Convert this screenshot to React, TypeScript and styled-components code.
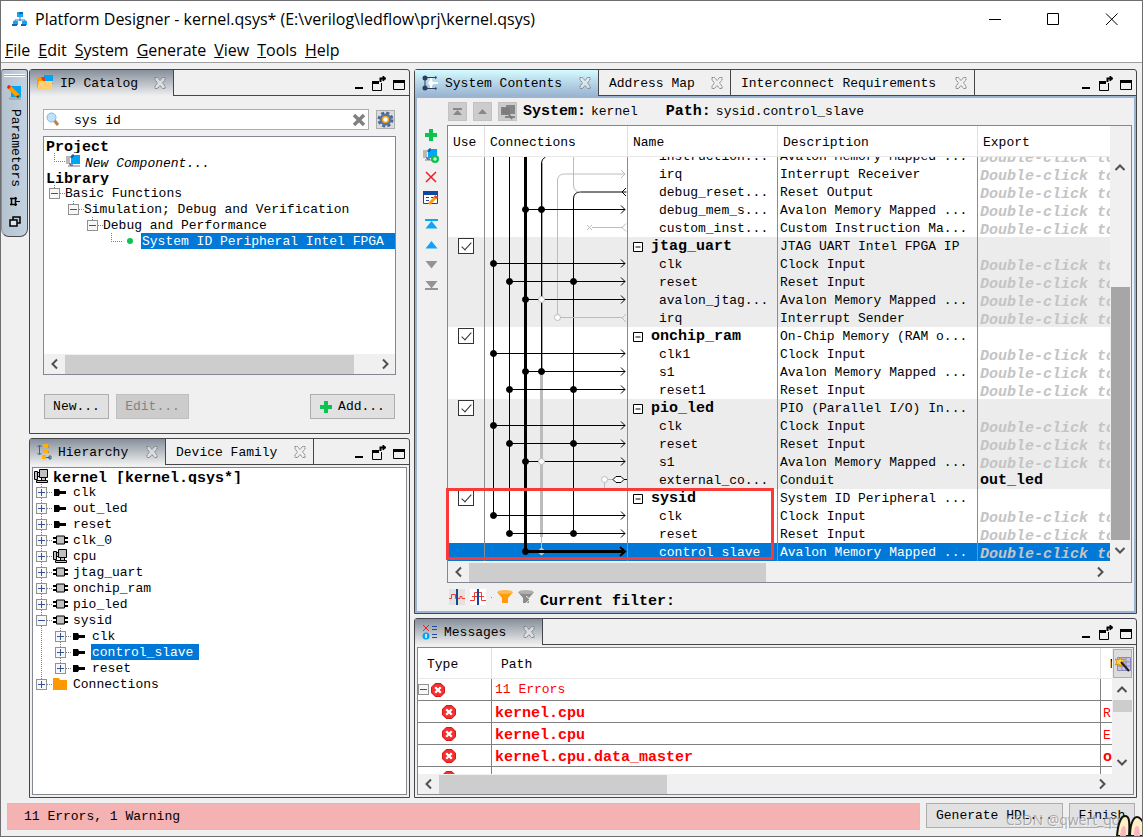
import React from "react";
import styled, { createGlobalStyle, css } from "styled-components";

const MONO = `"Liberation Mono", "Noto Sans CJK SC", monospace`;
const UI = `"Open Sans", "Noto Sans", sans-serif`;

const Global = createGlobalStyle`
  *, *::before, *::after { box-sizing: border-box; }
  body { margin: 0; background: #f0f0f0; color: #000; font: 13px/16px ${MONO}; }
  button, input { font: inherit; color: inherit; margin: 0; padding: 0; }
  button { background: none; border: 0; }
  svg { display: block; flex: none; }
  table { border-spacing: 0; }
`;

const Window = styled.div`
  position: relative;
  display: flex;
  flex-direction: column;
  height: 100vh;
  min-height: 700px;
  overflow: hidden;
  background: #f0f0f0;
  border: 1px solid #6e6e70;
`;

const TitleBar = styled.header`
  display: flex;
  align-items: center;
  height: 36px;
  padding: 0 23px 0 11px;
  gap: 7px;
  background: #fff;
  font: 16px/20px ${UI};
`;

const WindowTitle = styled.h1`
  flex: 1;
  margin: 0;
  font: inherit;
  white-space: nowrap;
`;

const WindowControls = styled.div`
  display: flex;
  gap: 43px;
`;

const MenuBar = styled.nav`
  display: flex;
  align-items: center;
  gap: 8px;
  height: 26px;
  padding: 0 4px;
  background: #fff;
  border-bottom: 1px solid #a0a0a0;
  font: 16px/20px ${UI};
`;

const MenuButton = styled.button`
  white-space: nowrap;
`;

const Workspace = styled.main`
  display: flex;
  flex: 1;
  min-height: 0;
  padding: 6px 5px 4px 0;
`;

const SideDock = styled.aside`
  display: flex;
  flex-direction: column;
  align-items: center;
  align-self: flex-start;
  gap: 8px;
  width: 27px;
  height: 168px;
  padding-top: 4px;
  background: linear-gradient(90deg, #b4c2cf, #c3d2e1);
  border: 1px solid #4a4a4a;
  border-left-color: #8a8f96;
  border-radius: 3px 3px 8px 8px;
`;

const Grip = styled.div`
  align-self: stretch;
  height: 3px;
  margin: 0 2px;
  border: solid #fff;
  border-width: 1px 0;
  background: #9aa8b8;
`;

const DockLabel = styled.button`
  writing-mode: vertical-rl;
  height: 80px;
`;

const LeftColumn = styled.div`
  display: flex;
  flex-direction: column;
  gap: 4px;
  flex: none;
  width: 381px;
  margin-left: 1px;
`;

const RightColumn = styled.div`
  display: flex;
  flex-direction: column;
  gap: 4px;
  flex: 1;
  min-width: 0;
  margin-left: 4px;
`;

const Panel = styled.section<{ $h?: number }>`
  display: flex;
  flex-direction: column;
  min-height: 0;
  ${(p) => (p.$h ? `flex: 0 0 ${p.$h}px;` : "flex: 1;")}
  border: 1px solid #46464a;
  border-radius: 3px 3px 0 0;
`;

const TabBar = styled.div`
  display: flex;
  flex: none;
  height: 26px;
`;

const Tab = styled.button<{ $look?: "gray" | "blue" }>`
  display: flex;
  align-items: center;
  gap: 6px;
  padding: 0 7px 0 ${(p) => (p.$look ? 7 : 10)}px;
  white-space: nowrap;
  border-right: 1px solid #46464a;
  ${(p) =>
    p.$look === "gray"
      ? css`background: linear-gradient(#858f9b, #b4bac1 45%, #f0f0f0);`
      : p.$look === "blue"
        ? css`background: linear-gradient(#d5fbff, #b9d9ea 45%, #9ab4d2);`
        : css`border-bottom: 1px solid #46464a;`}
`;

const TabLabel = styled.span<{ $w: number }>`
  width: ${(p) => p.$w}px;
  padding-top: 2px;
  text-align: left;
`;

const PanelControls = styled.div`
  display: flex;
  flex: 1;
  align-items: center;
  justify-content: flex-end;
  padding: 2px 4px 0 0;
  border-bottom: 1px solid #46464a;
`;

const CatalogBody = styled.div`
  display: flex;
  flex-direction: column;
  flex: 1;
  min-height: 0;
  padding: 13px 13px 14px;
`;

const SearchRow = styled.div`
  display: flex;
  align-items: center;
  gap: 7px;
  padding-right: 1px;
`;

const SearchBox = styled.label`
  display: flex;
  flex: 1;
  align-items: center;
  height: 21px;
  padding: 0 2px;
  background: #fff;
  border: 1px solid #abadb3;
`;

const SearchInput = styled.input`
  flex: 1;
  min-width: 0;
  margin-left: 14px;
  padding-top: 2px;
  border: 0;
  outline: 0;
  background: transparent;
`;

const SquareButton = styled.button<{ $disabled?: boolean }>`
  display: grid;
  place-items: center;
  width: 19px;
  height: 19px;
  border: 1px solid ${(p) => (p.$disabled ? "#c2c2c2" : "#adadad")};
  background: ${(p) => (p.$disabled ? "#cccccc" : "#dcdcdc")};
`;

const TreeBox = styled.div<{ $flush?: boolean }>`
  display: flex;
  flex-direction: column;
  flex: 1;
  min-height: 0;
  margin: ${(p) => (p.$flush ? "2px" : "6px 0 19px")};
  background: #fff;
  border: 1px solid #828790;
`;

const TreeList = styled.ul`
  flex: 1;
  min-height: 0;
  margin: 0;
  padding: 0;
  overflow: hidden;
  list-style: none;
`;

const TreeItem = styled.li`
  display: flex;
  height: 16px;
  white-space: nowrap;
`;

const TreeLabel = styled.span<{ $bold?: boolean; $italic?: boolean; $selected?: boolean; $fill?: boolean }>`
  line-height: 18px;
  ${(p) => p.$bold && "font-size: 15px; font-weight: 700; line-height: 22px; overflow: hidden;"}
  ${(p) => p.$italic && "font-style: italic; line-height: 22px;"}
  ${(p) => p.$selected && "background: #0078d7; color: #fff; padding: 0 6px 0 1px; margin-left: -1px;"}
  ${(p) => p.$fill && "flex: 1;"}
`;

const ButtonRow = styled.div`
  display: flex;
  gap: 7px;
  padding: 0 1px;
`;

const PushButton = styled.button<{ $w: number; $right?: boolean }>`
  display: flex;
  align-items: center;
  justify-content: center;
  gap: 6px;
  width: ${(p) => p.$w}px;
  height: 25px;
  padding-top: 1px;
  white-space: nowrap;
  background: #e1e1e1;
  border: 1px solid #adadad;
  ${(p) => p.$right && "margin-left: auto;"}
  &:disabled { background: #cccccc; border-color: #bfbfbf; color: #838383; }
`;

const ScrollTrack = styled.div`
  display: flex;
  flex: none;
  align-items: center;
  height: 20px;
  background: #f0f0f0;
`;

const ScrollCorner = styled.div`
  flex: none;
  height: 22px;
`;

const ScrollTrackV = styled.div<{ $pt?: number }>`
  display: flex;
  flex: 1;
  min-height: 0;
  flex-direction: column;
  align-items: center;
  width: 20px;
  padding-top: ${(p) => p.$pt ?? 0}px;
  background: #f0f0f0;
`;

const ThumbH = styled.div<{ $w: string }>`
  width: ${(p) => p.$w};
  height: 19px;
  background: #cdcdcd;
`;

const ThumbV = styled.div<{ $h: number; $dark?: boolean }>`
  flex: none;
  width: 19px;
  height: ${(p) => p.$h}px;
  background: ${(p) => (p.$dark ? "#a6a6a6" : "#cdcdcd")};
`;

const Spacer = styled.span`
  flex: 1;
`;

const ArrowButton = styled.button`
  display: grid;
  place-items: center;
  flex: none;
  width: 21px;
  height: 20px;
`;

/* System Contents */

const FocusFrame = styled.div`
  display: flex;
  flex-direction: column;
  flex: 1;
  min-height: 0;
  border: 2px solid #9ab4d2;
`;

const PathBar = styled.div`
  display: flex;
  align-items: center;
  flex: none;
  gap: 6px;
  height: 27px;
  padding-left: 31px;
  white-space: nowrap;
`;

const PathText = styled.span`
  margin-right: 22px;
`;

const Strong = styled.b`
  margin-right: 5px;
  font-size: 15px;
`;

const ContentRow = styled.div`
  display: flex;
  flex: 1;
  min-height: 0;
`;

const ToolStrip = styled.div`
  display: flex;
  flex: none;
  flex-direction: column;
  align-items: center;
  gap: 5px;
  width: 30px;
  padding: 2px 2px 0 0;
`;

const ToolGap = styled.div`
  height: 1px;
`;

const ToolButton = styled.button<{ $short?: boolean }>`
  display: grid;
  place-items: center;
  width: 18px;
  height: ${(p) => (p.$short ? 15 : 16)}px;
`;

const GridFrame = styled.div`
  display: flex;
  flex: 1;
  min-width: 0;
  margin-right: 2px;
  border: 1px solid #828790;
`;

const GridMain = styled.div`
  position: relative;
  display: flex;
  flex: 1;
  min-width: 0;
  flex-direction: column;
  background: #fff;
`;

const GridViewport = styled.div`
  position: relative;
  display: flex;
  flex: 1;
  min-height: 0;
  overflow: hidden;
  border-bottom: 1px solid #fff;
`;

const SystemTable = styled.table`
  display: flex;
  flex: 1;
  min-width: 0;
  flex-direction: column;
`;

const rowGrid = css`
  display: grid;
  flex: none;
  grid-template-columns: 37px 143px 150px 200px minmax(0, 1fr);
`;

const HeadRow = styled.tr`
  ${rowGrid}
  height: 31px;
  border-bottom: 1px solid #e8e8e8;
`;

const HeadCell = styled.th`
  padding: 9px 0 0 5px;
  font-weight: 400;
  text-align: left;
  border-right: 1px solid #e0e0e0;
  &:last-child { border-right: 0; }
`;

const SystemBody = styled.tbody`
  display: flex;
  flex: 1;
  min-height: 0;
  flex-direction: column;
  justify-content: flex-end;
  overflow: hidden;
`;

const SystemRow = styled.tr<{ $shade?: boolean; $selected?: boolean }>`
  ${rowGrid}
  height: 18px;
  line-height: 16px;
  background: ${(p) => (p.$selected ? "#0078d7" : p.$shade ? "#ececec" : "#fff")};
  color: ${(p) => (p.$selected ? "#fff" : "#000")};
`;

const Cell = styled.td<{ $pad?: number }>`
  display: flex;
  align-items: center;
  min-width: 0;
  padding: 2px 0 0 ${(p) => p.$pad ?? 2}px;
  overflow: hidden;
  white-space: nowrap;
  border-right: 1px solid #8c8c90;
  &:first-child { padding: 0 0 0 10px; }
  &:last-child { border-right: 0; }
`;

const ModuleName = styled.b`
  margin-left: 8px;
  font-size: 15px;
`;

const ExportHint = styled.i`
  padding-top: 4px;
  font-size: 15px;
  font-weight: 700;
  color: #c4c4c4;
`;

const ExportName = styled.b`
  font-size: 15px;
`;

const CheckBox = styled.input`
  position: relative;
  width: 16px;
  height: 16px;
  appearance: none;
  background: #fff;
  border: 1px solid #333;
  &:checked::after {
    content: "";
    position: absolute;
    left: 5px;
    top: 1px;
    width: 5px;
    height: 10px;
    border: solid #333;
    border-width: 0 1px 1px 0;
    transform: rotate(42deg);
  }
`;

const Wiring = styled.svg`
  position: absolute;
  left: 37px;
  bottom: 0;
`;

const HighlightAnchor = styled.div`
  position: absolute;
  left: 0;
  bottom: 22px;
  height: 0;
`;

const Highlight = styled.div`
  position: absolute;
  left: -2px;
  bottom: 0;
  width: 328px;
  height: 72px;
  border: 3px solid #f93a37;
`;

const ScrollColumn = styled.div`
  display: flex;
  flex: none;
  flex-direction: column;
  width: 21px;
  background: #f0f0f0;
`;

const FilterBar = styled.div`
  display: flex;
  align-items: center;
  flex: none;
  gap: 5px;
  height: 28px;
  padding-left: 32px;
`;

const FilterDot = styled.span`
  width: 1px;
  height: 1px;
  background: #909090;
`;

const FilterLabel = styled.b`
  padding: 10px 0 0 1px;
  font-size: 15px;
`;

/* Messages */

const MessageFrame = styled.div`
  display: flex;
  flex: 1;
  min-height: 0;
  margin: 2px;
  border: 1px solid #828790;
`;

const MessageTable = styled.table`
  display: flex;
  flex: 1;
  min-height: 0;
  flex-direction: column;
  overflow: hidden;
`;

const messageGrid = css`
  display: grid;
  flex: none;
  grid-template-columns: 74px minmax(0, 1fr) 11px;
`;

const MessageHead = styled.tr`
  ${messageGrid}
  height: 31px;
  border-bottom: 1px solid #e8e8e8;
`;

const MessageHeadCell = styled.th`
  padding: 9px 0 0 9px;
  overflow: hidden;
  font-weight: 400;
  text-align: left;
  border-right: 1px solid #e0e0e0;
  &:last-child { border-right: 0; }
`;

const MessageRow = styled.tr`
  ${messageGrid}
  height: 22px;
  border-bottom: 1px solid #808080;
  color: #ff0000;
`;

const MessageCell = styled.td<{ $bold?: boolean; $indent?: number; $low?: boolean }>`
  display: flex;
  align-items: center;
  overflow: hidden;
  padding: ${(p) => (p.$low ? 5 : 0)}px 0 0 ${(p) => p.$indent ?? 3}px;
  border-right: 1px solid #808080;
  &:last-child { padding-left: 2px; border-right: 0; }
  ${(p) => p.$bold && "font-size: 15px; font-weight: 700;"}
`;

const WizardButton = styled.button`
  display: grid;
  place-items: center;
  width: 19px;
  height: 29px;
  margin: 1px 0 0 1px;
  border: 1px solid #adadad;
  background: #dcdcdc;
`;

/* Status */

const StatusBar = styled.footer`
  display: flex;
  flex: none;
  gap: 6px;
  height: 34px;
  padding: 1px 7px 0 6px;
`;

const StatusText = styled.div`
  flex: 1;
  height: 27px;
  padding: 5px 16px;
  background: #f4b2b2;
  border: 1px solid #c4c4c4;
`;

const Watermark = styled.div`
  position: absolute;
  right: 13px;
  bottom: 7px;
  font: 14px/18px ${UI};
  color: rgba(150, 150, 150, 0.8);
  text-shadow: 1px 1px 0 rgba(255, 255, 255, 0.6);
`;

const Mascot = styled.svg`
  position: absolute;
  right: 0;
  bottom: 0;
`;

/* Icons */

const CloseX = () => (
  <svg width="12" height="12" viewBox="0 0 12 12" fill="#f0f0f0" fillOpacity=".6" stroke="#7a7e82" strokeWidth="1">
    <path d="M1 .5h2.500L6 3.500 8.500.5H11V3L8.500 6 11 9v2.500H8.500L6 8.500l-2.500 3H1V9l2.500-3L1 3z" strokeDasharray="1.500 .5" />
  </svg>
);

const MinMax = () => (
  <PanelControls>
    <svg width="50" height="16" viewBox="0 0 50 16" fill="none" stroke="#000">
      <path d="M0 12h8" strokeWidth="2" />
      <path d="M17.500 5v9.500h9V7" />
      <path d="M17 6.500h7" strokeWidth="3" />
      <path d="M25.500 6V2.500H29" strokeWidth="2" />
      <path d="M28 0l3 2.500L28 5z" fill="#000" />
      <path d="M38.500 4.500h11v9h-11z" /><path d="M38 5.500h12" strokeWidth="3" />
    </svg>
  </PanelControls>
);

const Plus = () => (
  <svg width="12" height="12" viewBox="0 0 12 12"><path d="M4 0h4v4h4v4H8v4H4V8H0V4h4z" fill="#0cc250" /></svg>
);

const Chevron = ({ dir }: { dir: "left" | "right" | "up" | "down" }) => {
  const d = {
    left: "M8 1.500 3.500 6 8 10.500",
    right: "M4 1.500 8.500 6 4 10.500",
    up: "M1.500 8 6 3.500 10.500 8",
    down: "M1.500 4 6 8.500 10.500 4",
  }[dir];
  return (
    <ArrowButton aria-label={`Scroll ${dir}`}>
      <svg width="12" height="12" viewBox="0 0 12 12" fill="none" stroke="#505050" strokeWidth="2"><path d={d} /></svg>
    </ArrowButton>
  );
};

const ComponentShape = () => (
  <g>
    <path d="M0 2h4v8H0zM2 11h12v2H2z" fill="#b8b8b8" />
    <path d="M5 1h9v9H5z" fill="#00a4f4" />
    <path d="M4 3h3V0M4 9v2h3" fill="none" stroke="#0a3c88" />
  </g>
);

const CatalogIcon = () => (
  <svg width="17" height="16" viewBox="0 0 17 16">
    <path d="M7 0h9v9H7z" fill="#00a4f4" />
    <path d="M4 2h4v5H4z" fill="#e03c28" />
    <path d="M0 2h4l1 3h1v9H0z" fill="#ff9800" />
    <path d="M2 6h14l-2 9H0z" fill="#ffcf70" />
  </svg>
);

const HierarchyIcon = () => (
  <svg width="15" height="16" viewBox="0 0 15 16">
    <path d="M2.500 2v8M.5 3l2-2 2 2M.5 9l2 2 2-2" stroke="#40608c" fill="none" />
    <path d="M6 0h5v4H6zM6 5h5v4H6zM5 11h4v4H5z" fill="#ffb300" />
    <path d="M11 2h1v2h-1zM11 7h1v2h-1z" fill="#e08c00" />
    <path d="M9 13.500h4M12 12h2v3h-2z" stroke="#40608c" fill="none" />
  </svg>
);

const ContentsIcon = () => (
  <svg width="17" height="16" viewBox="0 0 17 16" fill="none">
    <path d="M3 2v12M3 2.500h12M3 13.500h12" stroke="#28405c" />
    <path d="M9 3v10M9 8h7" stroke="#fff" strokeWidth="2" />
    <circle cx="3" cy="3" r="2.500" fill="#28405c" /><circle cx="3" cy="13" r="2.500" fill="#28405c" />
    <circle cx="9" cy="8" r="2.500" fill="#fff" /><path d="M13 1l2 1.500-2 1.500M13 12l2 1.500-2 1.500" stroke="#54708c" />
  </svg>
);

const MessagesIcon = () => (
  <svg width="16" height="16" viewBox="0 0 16 16" fill="none">
    <path d="M1 1l6 6M7 1 1 7" stroke="#ec2024" />
    <circle cx="4" cy="12" r="3.500" fill="#00a4f4" /><path d="M4 10v4" stroke="#fff" strokeWidth="1.500" />
    <path d="M10 2.500h5M10 5.500h5M10 10.500h5M10 13.500h5" stroke="#1c4ca0" />
  </svg>
);

const PencilIcon = () => (
  <svg width="15" height="15" viewBox="0 0 15 15">
    <path d="M4 1h10v11H4z" fill="#00a4f4" /><path d="M2 12h12v3H2z" fill="#a8acb0" />
    <path d="M2 2l9 9" stroke="#ffa000" strokeWidth="4" /><path d="M1 0l3 1-2 3-2-1z" fill="#ec2024" /><path d="M9 12l3 1-1-3z" fill="#332" />
  </svg>
);

const ErrorIcon = () => (
  <svg width="14" height="14" viewBox="0 0 15 15">
    <path d="M4.500.5h6l4 4v6l-4 4h-6l-4-4v-6z" fill="#f23030" stroke="#d80808" />
    <path d="M4.500 4.500l6 6M10.500 4.500l-6 6" stroke="#fff" strokeWidth="2.500" />
  </svg>
);

const ExpanderShape = ({ x, open }: { x: number; open?: boolean }) => (
  <g transform={`translate(${x} 3)`}>
    <rect x=".5" y=".5" width="10" height="10" fill="#f7f7f7" stroke="#919191" />
    <path d={open ? "M2 5.500h7" : "M2 5.500h7M5.500 2v7"} stroke="#3452a0" />
  </g>
);

const Chip = () => (
  <g>
    <path d="M0 6h15M0 10h15" stroke="#000" strokeWidth="2" />
    <path d="M3.500 4h8v8h-8z" fill="#c0c0c0" stroke="#000" />
  </g>
);
const Port = () => <path d="M1 5h5l1 2h6v3H7l-1 2H1z" />;
const Machine = () => (
  <g fill="#c0c0c0" stroke="#000">
    <path d="M.5 3.500h3v8h-3zM5.500 1.500h8v8h-8zM3.500 4.500h2v4h-2zM2.500 12.500h11v2h-11zM7.500 9.500h4v3h-4z" />
  </g>
);
const Folder = () => <path d="M0 2h6l1 2h7v10H0z" fill="#ff9800" />;

/* Data */

type Kind = "port" | "chip" | "machine" | "folder";
const hierarchy: { label: string; kind: Kind; level: number; open?: boolean; selected?: boolean }[] = [
  { label: "clk", kind: "port", level: 0 },
  { label: "out_led", kind: "port", level: 0 },
  { label: "reset", kind: "port", level: 0 },
  { label: "clk_0", kind: "chip", level: 0 },
  { label: "cpu", kind: "machine", level: 0 },
  { label: "jtag_uart", kind: "chip", level: 0 },
  { label: "onchip_ram", kind: "chip", level: 0 },
  { label: "pio_led", kind: "chip", level: 0 },
  { label: "sysid", kind: "chip", level: 0, open: true },
  { label: "clk", kind: "port", level: 1 },
  { label: "control_slave", kind: "port", level: 1, selected: true },
  { label: "reset", kind: "port", level: 1 },
  { label: "Connections", kind: "folder", level: 0 },
];

const kinds: Record<Kind, React.ReactElement> = {
  port: <Port />, chip: <Chip />, machine: <Machine />, folder: <Folder />,
};

type SysRow = { name: string; desc: string; module?: boolean; exp?: string; shade?: boolean; selected?: boolean };
const systemRows: SysRow[] = [
  { name: "instruction...", desc: "Avalon Memory Mapped ..." },
  { name: "irq", desc: "Interrupt Receiver" },
  { name: "debug_reset...", desc: "Reset Output" },
  { name: "debug_mem_s...", desc: "Avalon Memory Mapped ..." },
  { name: "custom_inst...", desc: "Custom Instruction Ma..." },
  { name: "jtag_uart", desc: "JTAG UART Intel FPGA IP", module: true, shade: true },
  { name: "clk", desc: "Clock Input", shade: true },
  { name: "reset", desc: "Reset Input", shade: true },
  { name: "avalon_jtag...", desc: "Avalon Memory Mapped ...", shade: true },
  { name: "irq", desc: "Interrupt Sender", shade: true },
  { name: "onchip_ram", desc: "On-Chip Memory (RAM o...", module: true },
  { name: "clk1", desc: "Clock Input" },
  { name: "s1", desc: "Avalon Memory Mapped ..." },
  { name: "reset1", desc: "Reset Input" },
  { name: "pio_led", desc: "PIO (Parallel I/O) In...", module: true, shade: true },
  { name: "clk", desc: "Clock Input", shade: true },
  { name: "reset", desc: "Reset Input", shade: true },
  { name: "s1", desc: "Avalon Memory Mapped ...", shade: true },
  { name: "external_co...", desc: "Conduit", exp: "out_led", shade: true },
  { name: "sysid", desc: "System ID Peripheral ...", module: true },
  { name: "clk", desc: "Clock Input" },
  { name: "reset", desc: "Reset Input" },
  { name: "control_slave", desc: "Avalon Memory Mapped ...", selected: true },
];

/* Each wire: y, start x, and the x positions of its solid junctions. */
const wires: [number, number, number[]][] = [
  [53, 40, [40, 56]],
  [107, 8, [8]],
  [125, 24, [24, 88]],
  [143, 40, [40]],
  [197, 8, [8]],
  [215, 40, [40, 56]],
  [233, 24, [24, 88]],
  [269, 8, [8]],
  [287, 24, [24, 88]],
  [305, 40, [40]],
  [359, 8, [8]],
  [377, 24, [24, 88]],
];

const Connections = () => (
  <Wiring width="142" height="404" viewBox="0 0 142 404" fill="none" stroke="#000">
    <path d="M56.500 214v166" stroke="#bcbcbc" strokeWidth="3" />
    <path d="M56.500 380v15" stroke="#bcbcbc" />
    <path d="M57 6v208" stroke="#a8a8a8" strokeWidth="2" />
    <path d="M56.500 215V6q0-4 4-6" strokeWidth="1" />
    <path d="M8.500 0v359M24.500 0v377M88.500 377V42q0-7 7-7h46" />
    <path d="M40.500 0v395" strokeWidth="3" />
    <g stroke="#bcbcbc">
      <path d="M88.500 0v28q0 7 7 7M72.500 160V24q0-7 7-7h60M136 13l4 4-4 4M141 157l-4 4 4 4M75 160.500h63M102 68l5 5M107 68l-5 5M107 70.500h31M141 66.500l-4 4 4 4M119.500 324v10M122 322.500h6" />
    </g>
    <path d="M141 31l-4 4 4 4" />
    {wires.map(([y, x, dots]) => (
      <g key={y}>
        <path d={`M${x} ${y - 0.5}h${140 - x}M136 ${y - 4.5}l4 4-4 4`} />
        {dots.map((d) => <circle key={d} cx={d + 0.5} cy={y - 0.5} r="3" fill="#000" />)}
      </g>
    ))}
    <g fill="#fff" stroke="#bcbcbc">
      <circle cx="72.500" cy="160.500" r="3" /><circle cx="119.500" cy="322.500" r="3" />
      <circle cx="56.500" cy="142.500" r="3" /><circle cx="56.500" cy="304.500" r="3" />
    </g>
    <path d="M128 322.500l3-3h5l3 3-3 3h-5zM139 322.500h3" fill="#fff" />
    <path d="M40 394.500h98" strokeWidth="3" /><path d="M135 390l5 4.500-5 4.500" strokeWidth="2" />
    <circle cx="40.500" cy="394.500" r="3" fill="#000" />
    <path d="M53.500 393l3-2.500 3 2.500zM53.500 396l3 2.500 3-2.500z" fill="#c8c8c8" stroke="none" />
  </Wiring>
);

const Tri = ({ color, up, bar }: { color: string; up?: boolean; bar?: boolean }) => (
  <svg width="13" height="11" viewBox="0 0 13 11" fill={color}>
    <path d={up ? "M6.500 2l6 7.500h-12z" : "M6.500 9.500l6-7.500h-12z"} />
    {bar && <path d={up ? "M0 0h13v2H0z" : "M0 9h13v2H0z"} />}
  </svg>
);

const CatalogTree = () => (
  <TreeList>
    <TreeItem><svg width="2" height="16" /><TreeLabel $bold>Project</TreeLabel></TreeItem>
    <TreeItem>
      <svg width="41" height="16" viewBox="0 0 41 16">
        <path d="M10.500 0v8M10 8.500h12" stroke="#808080" strokeDasharray="1 1" />
        <g transform="translate(22 1)"><ComponentShape /></g>
      </svg>
      <TreeLabel $italic>New Component...</TreeLabel>
    </TreeItem>
    <TreeItem><svg width="2" height="16" /><TreeLabel $bold>Library</TreeLabel></TreeItem>
    {["Basic Functions", "Simulation; Debug and Verification", "Debug and Performance"].map((t, i) => (
      <TreeItem key={t}>
        <svg width={21 + i * 19} height="16">
          <path d={`M${10.5 + i * 19} 0v3M${16 + i * 19} 8.500h5`} stroke="#808080" strokeDasharray="1 1" />
          <ExpanderShape x={5 + i * 19} open />
        </svg>
        <TreeLabel>{t}</TreeLabel>
      </TreeItem>
    ))}
    <TreeItem>
      <svg width="98" height="16">
        <path d="M67.500 0v8M67 8.500h11" stroke="#808080" strokeDasharray="1 1" />
        <circle cx="86" cy="8" r="3" fill="#0cc250" />
      </svg>
      <TreeLabel $selected $fill>System ID Peripheral Intel FPGA</TreeLabel>
    </TreeItem>
  </TreeList>
);

const HierarchyTree = () => (
  <TreeList>
    <TreeItem>
      <svg width="20" height="16"><g transform="translate(1 0)"><Machine /></g></svg>
      <TreeLabel $bold>kernel [kernel.qsys*]</TreeLabel>
    </TreeItem>
    {hierarchy.map((n, i) => (
      <TreeItem key={i}>
        <svg width={40 + n.level * 19} height="16">
          <path
            d={`M8.500 0v${n.kind === "folder" ? 8 : 16}M${14 + n.level * 19} 8.500h5${n.level ? `M27.500 0v${n.label === "reset" ? 8 : 16}` : ""}`}
            stroke="#808080" strokeDasharray="1 1"
          />
          <ExpanderShape x={3 + n.level * 19} open={n.open} />
          <g transform={`translate(${20 + n.level * 19} 0)`}>{kinds[n.kind]}</g>
        </svg>
        <TreeLabel $selected={n.selected}>{n.label}</TreeLabel>
      </TreeItem>
    ))}
  </TreeList>
);

const menus = ["File", "Edit", "System", "Generate", "View", "Tools", "Help"];

export default function App() {
  return (
    <Window>
      <Global />
      <TitleBar>
        <svg width="16" height="16" viewBox="0 0 16 16">
          <path d="M8 6v4M3 12V9h10v3" fill="none" stroke="#1580d0" />
          <path d="M5 1h6v5H5zM1 10h5v4H1zM10 10h5v4h-5z" fill="#18a4f0" />
          <path d="M7 1h4v2H7zM0 13h5v2H0zM9 13h5v2H9z" fill="#1764b0" />
        </svg>
        <WindowTitle>Platform Designer - kernel.qsys* (E:\verilog\ledflow\prj\kernel.qsys)</WindowTitle>
        <WindowControls>
          {["M1 6.500h12", "M1.500.5h11v11h-11z", "M2 .5l11.500 11.500M13.500.5 2 12"].map((d, i) => (
            <button key={d} aria-label={["Minimize", "Maximize", "Close"][i]}>
              <svg width="15" height="13" viewBox="0 0 15 13" fill="none" stroke="#000"><path d={d} /></svg>
            </button>
          ))}
        </WindowControls>
      </TitleBar>
      <MenuBar>{menus.map((m) => <MenuButton key={m}><u>{m[0]}</u>{m.slice(1)}</MenuButton>)}</MenuBar>

      <Workspace>
        <SideDock>
          <Grip />
          <PencilIcon />
          <DockLabel>Parameters</DockLabel>
          <svg width="12" height="36" viewBox="0 0 12 36" fill="none" stroke="#000">
            <path d="M1 2.500h7M1 8.500h7M2.500 2v7M6.500 1v9" strokeWidth="1.500" /><path d="M7 5.500h4" />
            <path d="M4 21h7v6H4z" strokeWidth="1.500" /><path d="M1 24h7v6H1z" fill="#dfe6ee" strokeWidth="1.500" />
          </svg>
        </SideDock>

        <LeftColumn>
          <Panel $h={365}>
            <TabBar>
              <Tab $look="gray"><CatalogIcon /><TabLabel $w={88}>IP Catalog</TabLabel><CloseX /></Tab>
              <MinMax />
            </TabBar>
            <CatalogBody>
              <SearchRow>
                <SearchBox>
                  <svg width="14" height="15" viewBox="0 0 14 15">
                    <path d="M8 8l4 5" stroke="#c08040" strokeWidth="3" />
                    <circle cx="5.500" cy="5.500" r="4.500" fill="#bfe2f8" stroke="#8cb4d8" />
                  </svg>
                  <SearchInput aria-label="Search IP" defaultValue="sys id" />
                  <svg width="14" height="14" viewBox="0 0 14 14"><path d="M2 2l10 10M12 2 2 12" stroke="#808080" strokeWidth="3.500" /></svg>
                </SearchBox>
                <SquareButton aria-label="Search settings">
                  <svg width="17" height="17" viewBox="0 0 17 17">
                    <circle cx="8.500" cy="8.500" r="6.500" fill="none" stroke="#4a6a98" strokeWidth="3" strokeDasharray="3 2.100" />
                    <circle cx="8.500" cy="8.500" r="4.500" fill="#fff" stroke="#54749f" strokeWidth="3" />
                    <circle cx="8.500" cy="8.500" r="3" fill="#fff" stroke="#f0a020" strokeWidth="1.500" />
                  </svg>
                </SquareButton>
              </SearchRow>
              <TreeBox>
                <CatalogTree />
                <ScrollTrack><Chevron dir="left" /><ThumbH $w="289px" /><Spacer /><Chevron dir="right" /></ScrollTrack>
              </TreeBox>
              <ButtonRow>
                <PushButton $w={65}>New...</PushButton>
                <PushButton $w={73} disabled>Edit...</PushButton>
                <PushButton $w={85} $right><Plus />Add...</PushButton>
              </ButtonRow>
            </CatalogBody>
          </Panel>

          <Panel>
            <TabBar>
              <Tab $look="gray"><HierarchyIcon /><TabLabel $w={82}>Hierarchy</TabLabel><CloseX /></Tab>
              <Tab><TabLabel $w={112}>Device Family</TabLabel><CloseX /></Tab>
              <MinMax />
            </TabBar>
            <TreeBox $flush><HierarchyTree /></TreeBox>
          </Panel>
        </LeftColumn>

        <RightColumn>
          <Panel>
            <TabBar>
              <Tab $look="blue"><ContentsIcon /><TabLabel $w={128}>System Contents</TabLabel><CloseX /></Tab>
              <Tab><TabLabel $w={96}>Address Map</TabLabel><CloseX /></Tab>
              <Tab><TabLabel $w={208}>Interconnect Requirements</TabLabel><CloseX /></Tab>
              <MinMax />
            </TabBar>
            <FocusFrame>
              <PathBar>
                <SquareButton $disabled aria-label="Move to top"><svg width="9" height="8"><path d="M0 0h9v2H0zM4.500 2 9 7H0z" fill="#888" /></svg></SquareButton>
                <SquareButton $disabled aria-label="Move up"><svg width="9" height="6"><path d="M4.500 0 9 5H0z" fill="#888" /></svg></SquareButton>
                <SquareButton $disabled aria-label="Drill into subsystem">
                  <svg width="16" height="16" viewBox="0 0 16 16"><path d="M6 1h9v9H6zM1 3h3v8H1zM5 12h10v2H5z" fill="#858585" /><circle cx="6" cy="7" r="4" fill="#7c7c7c" /><path d="M8 9l4 6" stroke="#7c7c7c" strokeWidth="2" /></svg>
                </SquareButton>
                <PathText><Strong>System:</Strong>kernel</PathText>
                <PathText><Strong>Path:</Strong>sysid.control_slave</PathText>
              </PathBar>
              <ContentRow>
                <ToolStrip>
                  <ToolButton aria-label="Add"><Plus /></ToolButton>
                  <ToolButton aria-label="Add component">
                    <svg width="17" height="16" viewBox="0 0 17 16"><ComponentShape /><circle cx="12" cy="11" r="4" fill="#0cc250" /><path d="M12 9v4M10 11h4" stroke="#fff" /></svg>
                  </ToolButton>
                  <ToolButton aria-label="Remove"><svg width="12" height="12" viewBox="0 0 12 12"><path d="M1 1l10 10M11 1 1 11" stroke="#ec2024" strokeWidth="1.500" /></svg></ToolButton>
                  <ToolButton aria-label="Edit">
                    <svg width="16" height="15" viewBox="0 0 16 15">
                      <path d="M.5.5h14v12H.5z" fill="#fff" stroke="#1048a0" /><path d="M0 0h15v4H0z" fill="#1048a0" />
                      <path d="M3 6.500h3M3 9.500h3M8 6.500h4" stroke="#1048a0" /><path d="M6 13l7-7" stroke="#ff9c10" strokeWidth="3" /><path d="M12 4l3 2-1 2-3-2z" fill="#ec4030" />
                    </svg>
                  </ToolButton>
                  <ToolGap />
                  <ToolButton $short aria-label="Move to top"><Tri color="#10a4f8" up bar /></ToolButton>
                  <ToolButton $short aria-label="Move up"><Tri color="#10a4f8" up /></ToolButton>
                  <ToolButton $short aria-label="Move down"><Tri color="#949494" /></ToolButton>
                  <ToolButton $short aria-label="Move to bottom"><Tri color="#949494" bar /></ToolButton>
                </ToolStrip>
                <GridFrame>
                  <GridMain>
                    <GridViewport>
                      <SystemTable>
                        <thead>
                          <HeadRow>{["Use", "Connections", "Name", "Description", "Export"].map((h) => <HeadCell key={h}>{h}</HeadCell>)}</HeadRow>
                        </thead>
                        <SystemBody>
                          {systemRows.map((r, i) => (
                            <SystemRow key={i} $shade={r.shade} $selected={r.selected}>
                              <Cell>{r.module && <CheckBox type="checkbox" defaultChecked aria-label={`Use ${r.name}`} />}</Cell>
                              <Cell />
                              <Cell $pad={r.module ? 5 : 31}>
                                {r.module ? (
                                  <>
                                    <svg width="10" height="10" viewBox="0 0 10 10" fill="#fff" stroke="#000"><path d="M.5.5h9v9h-9zM2.500 5h5" /></svg>
                                    <ModuleName>{r.name}</ModuleName>
                                  </>
                                ) : r.name}
                              </Cell>
                              <Cell>{r.desc}</Cell>
                              <Cell>{r.exp ? <ExportName>{r.exp}</ExportName> : !r.module && <ExportHint>Double-click to</ExportHint>}</Cell>
                            </SystemRow>
                          ))}
                        </SystemBody>
                      </SystemTable>
                      <Connections />
                    </GridViewport>
                    <ScrollTrack><Chevron dir="left" /><ThumbH $w="297px" /><Spacer /><Chevron dir="right" /></ScrollTrack>
                    <HighlightAnchor><Highlight /></HighlightAnchor>
                  </GridMain>
                  <ScrollColumn>
                    <ScrollTrackV $pt={32}>
                      <Chevron dir="up" />
                      <Spacer />
                      <ThumbV $h={253} $dark />
                      <Chevron dir="down" />
                    </ScrollTrackV>
                    <ScrollCorner />
                  </ScrollColumn>
                </GridFrame>
              </ContentRow>
              <FilterBar>
                <svg width="16" height="16" viewBox="0 0 16 16" fill="none"><path d="M0 0h16v16H0z" fill="#e4e2de" /><path d="M0 9.500h2.500v-4h4v4H11v-2h2v2h3" stroke="#f03c32" /><path d="M8 0v16" stroke="#1048a0" strokeWidth="2" /></svg>
                <svg width="16" height="16" viewBox="0 0 16 16" fill="none"><path d="M0 0h16v16H0z" fill="#fff" /><path d="M0 11.500h4.500v-8h7v8H16M2 7.500h5M9 7.500h5" stroke="#f03c32" /><path d="M8 0v16" stroke="#1048a0" strokeWidth="2" /></svg>
                <FilterDot />
                <svg width="16" height="16" viewBox="0 0 16 16"><path d="M0 3h16l-5 6v5H5V9z" fill="#ff9c08" /><ellipse cx="8" cy="3" rx="7.500" ry="2" fill="#ffb850" /></svg>
                <svg width="16" height="16" viewBox="0 0 16 16"><path d="M0 3h16l-5 6v5H5V9z" fill="#8c8c8c" /><ellipse cx="8" cy="3" rx="7.500" ry="2" fill="#b0b0b0" /><path d="M8 7l8 7M16 7l-8 7" stroke="#f0f0f0" /></svg>
                <FilterLabel>Current filter:</FilterLabel>
              </FilterBar>
            </FocusFrame>
          </Panel>

          <Panel $h={180}>
            <TabBar>
              <Tab $look="gray"><MessagesIcon /><TabLabel $w={73}>Messages</TabLabel><CloseX /></Tab>
              <MinMax />
            </TabBar>
            <MessageFrame>
              <GridMain>
                <MessageTable>
                  <thead>
                    <MessageHead><MessageHeadCell>Type</MessageHeadCell><MessageHeadCell>Path</MessageHeadCell><MessageHeadCell>M</MessageHeadCell></MessageHead>
                  </thead>
                  <tbody>
                    <MessageRow>
                      <MessageCell $indent={0}>
                        <svg width="13" height="16"><g transform="translate(0 -1)"><ExpanderShape x={0} open /></g></svg><ErrorIcon />
                      </MessageCell>
                      <MessageCell>11 Errors</MessageCell><MessageCell />
                    </MessageRow>
                    {[["kernel.cpu", "R"], ["kernel.cpu", "E"], ["kernel.cpu.data_master", "o"], ["", ""]].map(([p, m], i) => (
                      <MessageRow key={i}>
                        <MessageCell $indent={24}><ErrorIcon /></MessageCell>
                        <MessageCell $bold $low>{p}</MessageCell>
                        <MessageCell $bold={m === "o"} $low>{m}</MessageCell>
                      </MessageRow>
                    ))}
                  </tbody>
                </MessageTable>
                <ScrollTrack><Chevron dir="left" /><ThumbH $w="228px" /><Spacer /><Chevron dir="right" /></ScrollTrack>
              </GridMain>
              <ScrollColumn>
                <WizardButton aria-label="Column settings">
                  <svg width="16" height="16" viewBox="0 0 16 16">
                    <path d="M2.500 1.500h13v13h-13zM2 6h13M2 10h13M7 1v13M11 1v13" fill="#c8c4e8" stroke="#8c88b8" />
                    <path d="M5 1l1.500 3L10 3 8 6l2 3-3.500-1L5 11 4 8 0 9l2-3-2-3 4 1z" fill="#ffd840" stroke="#d89010" /><path d="M6 6l8 9" stroke="#202020" strokeWidth="2" />
                  </svg>
                </WizardButton>
                <ScrollTrackV $pt={2}>
                  <Chevron dir="up" />
                  <ThumbV $h={12} />
                  <Spacer />
                  <Chevron dir="down" />
                </ScrollTrackV>
                <ScrollCorner />
              </ScrollColumn>
            </MessageFrame>
          </Panel>
        </RightColumn>
      </Workspace>

      <StatusBar>
        <StatusText role="status">11 Errors, 1 Warning</StatusText>
        <PushButton $w={137}>Generate HDL...</PushButton>
        <PushButton $w={66}>Finish</PushButton>
      </StatusBar>
      <Watermark>CSDN @qwert_qqq</Watermark>
      <Mascot width="26" height="22" viewBox="0 0 26 22">
        <path d="M1 22C2 10 5 2 9 2s5 4 4 20zM14 22c0-11 3-19 7-19 3 0 4 2 6 5v14z" fill="#fdf0c4" stroke="#111" strokeWidth="2" />
        <path d="M4 22c1-7 2-10 4-10s2 4 2 10zM18 22c0-6 1-10 3-10s3 5 3 10z" fill="#fbb4c4" />
      </Mascot>
    </Window>
  );
}
